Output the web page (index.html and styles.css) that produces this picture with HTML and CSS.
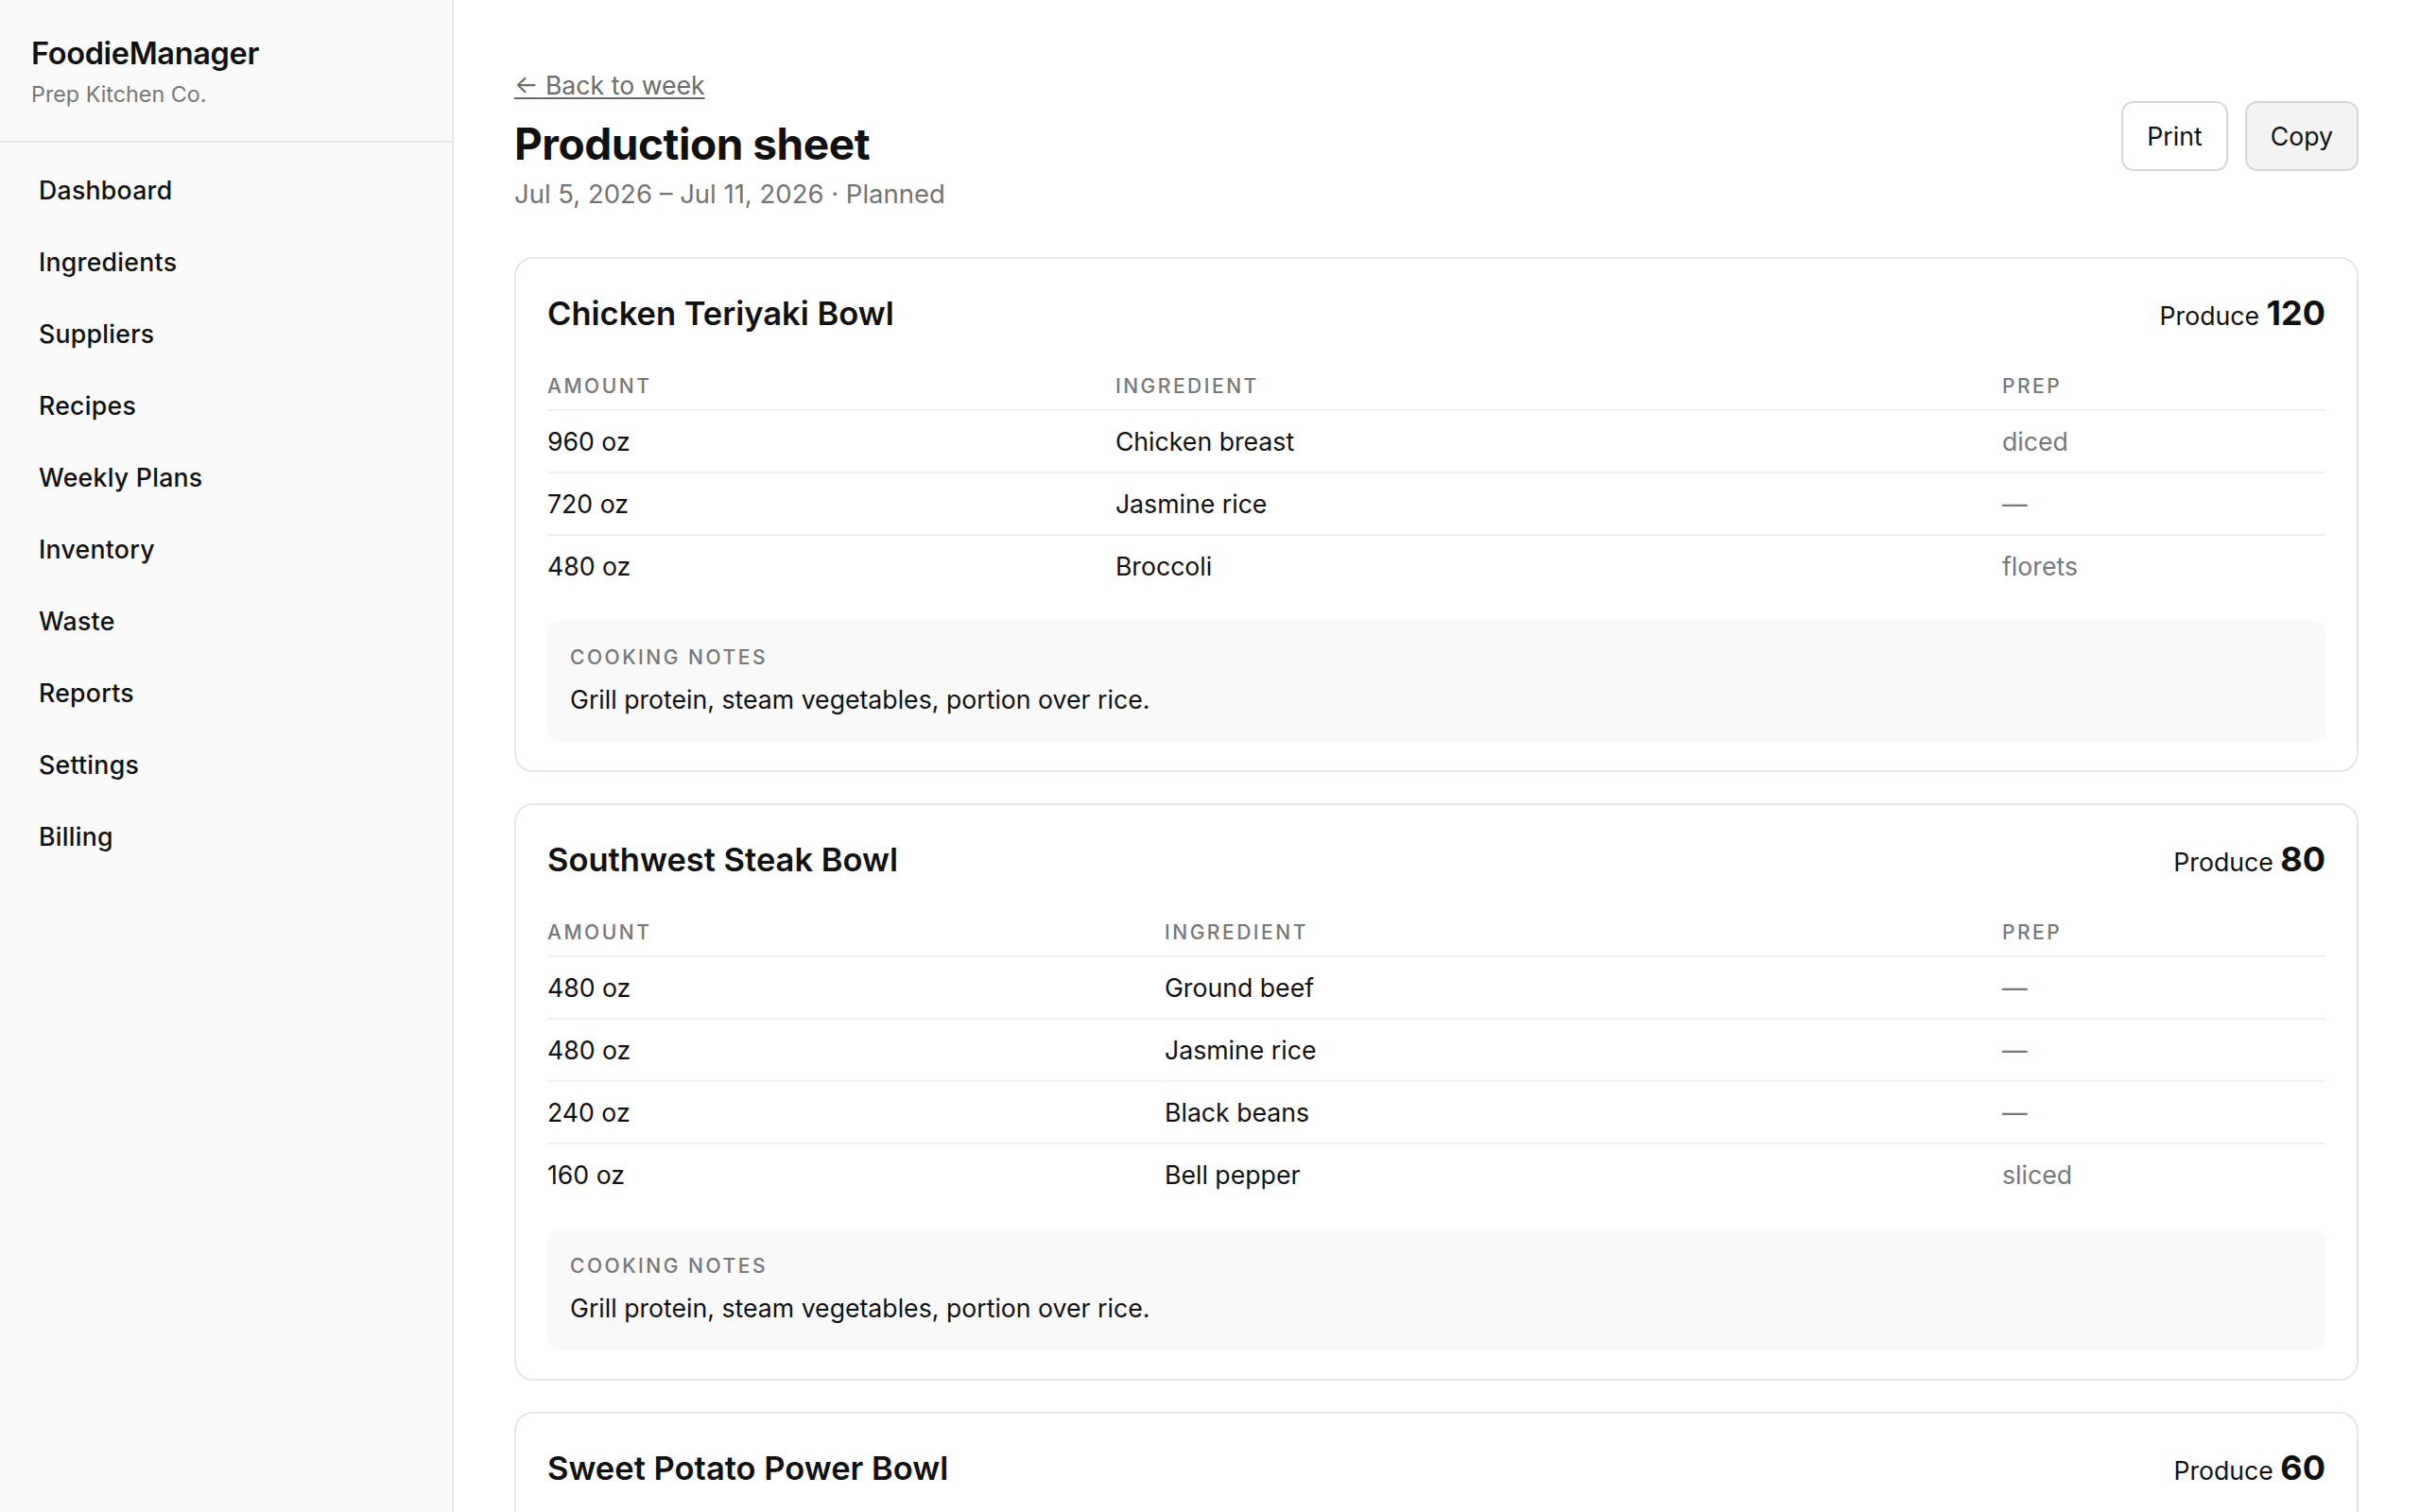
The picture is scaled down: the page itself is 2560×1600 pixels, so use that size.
FILE: index.html
```html
<!DOCTYPE html>
<html lang="en">

<head>
  <meta charset="UTF-8">
  <meta name="viewport" content="width=device-width, initial-scale=1.0">
  <title>Production sheet - FoodieManager</title>
  <link rel="stylesheet" href="styles.css">
</head>

<body>
  <div class="app">
    <aside class="sidebar">
      <div class="brand">
        <div class="brand-name">FoodieManager</div>
        <div class="brand-sub">Prep Kitchen Co.</div>
      </div>
      <nav class="nav">
        <a href="#">Dashboard</a>
        <a href="#">Ingredients</a>
        <a href="#">Suppliers</a>
        <a href="#">Recipes</a>
        <a href="#">Weekly Plans</a>
        <a href="#">Inventory</a>
        <a href="#">Waste</a>
        <a href="#">Reports</a>
        <a href="#">Settings</a>
        <a href="#">Billing</a>
      </nav>
    </aside>

    <main class="main">
      <div class="page-head">
        <div>
          <a class="back" href="#">← Back to week</a>
          <h1>Production sheet</h1>
          <div class="meta">Jul 5, 2026 – Jul 11, 2026 · Planned</div>
        </div>
        <div class="actions">
          <button class="btn">Print</button>
          <button class="btn btn-muted">Copy</button>
        </div>
      </div>

      <!-- one card per recipe -->
      <section class="recipe">
        <div class="recipe-head">
          <h2 class="recipe-title">Chicken Teriyaki Bowl</h2>
          <div class="yield">Produce <strong>120</strong></div>
        </div>
        <table class="lines">
          <thead>
            <tr><th>Amount</th><th>Ingredient</th><th class="prep">Prep</th></tr>
          </thead>
          <tbody>
            <tr><td>960 oz</td><td>Chicken breast</td><td class="prep">diced</td></tr>
            <tr><td>720 oz</td><td>Jasmine rice</td><td class="prep">—</td></tr>
            <tr><td>480 oz</td><td>Broccoli</td><td class="prep">florets</td></tr>
          </tbody>
        </table>
        <div class="notes">
          <div class="notes-label">Cooking notes</div>
          <p>Grill protein, steam vegetables, portion over rice.</p>
        </div>
      </section>

      <section class="recipe">
        <div class="recipe-head">
          <h2 class="recipe-title">Southwest Steak Bowl</h2>
          <div class="yield">Produce <strong>80</strong></div>
        </div>
        <table class="lines">
          <thead>
            <tr><th>Amount</th><th>Ingredient</th><th class="prep">Prep</th></tr>
          </thead>
          <tbody>
            <tr><td>480 oz</td><td>Ground beef</td><td class="prep">—</td></tr>
            <tr><td>480 oz</td><td>Jasmine rice</td><td class="prep">—</td></tr>
            <tr><td>240 oz</td><td>Black beans</td><td class="prep">—</td></tr>
            <tr><td>160 oz</td><td>Bell pepper</td><td class="prep">sliced</td></tr>
          </tbody>
        </table>
        <div class="notes">
          <div class="notes-label">Cooking notes</div>
          <p>Grill protein, steam vegetables, portion over rice.</p>
        </div>
      </section>

      <section class="recipe">
        <div class="recipe-head">
          <h2 class="recipe-title">Sweet Potato Power Bowl</h2>
          <div class="yield">Produce <strong>60</strong></div>
        </div>
        <table class="lines">
          <thead>
            <tr><th>Amount</th><th>Ingredient</th><th class="prep">Prep</th></tr>
          </thead>
          <tbody>
            <tr><td>360 oz</td><td>Sweet potato</td><td class="prep">cubed</td></tr>
            <tr><td>240 oz</td><td>Quinoa</td><td class="prep">—</td></tr>
            <tr><td>180 oz</td><td>Chickpeas</td><td class="prep">roasted</td></tr>
          </tbody>
        </table>
        <div class="notes">
          <div class="notes-label">Cooking notes</div>
          <p>Roast potatoes and chickpeas, portion over quinoa.</p>
        </div>
      </section>
    </main>
  </div>
</body>

</html>
```

FILE: styles.css
```css
/* Base */
* {
  box-sizing: border-box;
}
body {
  margin: 0;
  background: #fff;
  color: #111;
  font-family: Inter, 'Noto Sans', sans-serif;
}
.app {
  display: flex;
  min-height: 100vh;
}

/* Sidebar */
.sidebar {
  width: 480px;
  flex-shrink: 0;
  background: #fafafa;
  border-right: 2px solid #e8e8e8;
}
.brand {
  padding: 33px;
  border-bottom: 2px solid #e8e8e8;
}
.brand-name {
  font-size: 32.5px;
  line-height: 47px;
  font-weight: 600;
  letter-spacing: -0.01em;
}
.brand-sub {
  margin-top: 3px;
  font-size: 23.3px;
  line-height: 33px;
  color: #777;
}
.nav {
  display: flex;
  flex-direction: column;
  gap: 2px;
  padding: 13px 20px;
}
.nav a {
  padding: 17px 21px;
  border-radius: 10px;
  color: #111;
  text-decoration: none;
  font-size: 26.67px;
  line-height: 40px;
  font-weight: 500;
  letter-spacing: 0.01em;
}

/* Main */
.main {
  flex: 1;
  min-width: 0;
  padding: 70px 65px 64px 64px;
}
.page-head {
  display: flex;
  justify-content: space-between;
  align-items: flex-start;
  margin-bottom: 47px;
}
.back {
  display: inline-block;
  color: #6b6b6b;
  font-size: 26.67px;
  line-height: 40px;
  text-decoration: underline;
  text-underline-offset: 3px;
}
h1 {
  margin: 14px 0 4px;
  font-size: 46px;
  line-height: 57px;
  font-weight: 700;
  letter-spacing: -0.01em;
}
.meta {
  color: #737373;
  font-size: 27.5px;
  line-height: 40px;
}
.actions {
  display: flex;
  gap: 18px;
  margin-top: 37px;
}
.btn {
  padding: 15px 25px;
  border: 2px solid #d6d6d6;
  border-radius: 13px;
  background: #fff;
  color: #111;
  font-family: inherit;
  font-size: 26.67px;
  line-height: 40px;
  cursor: pointer;
}
.btn-muted {
  background: #f3f3f3;
}

/* Recipe card */
.recipe {
  border: 2px solid #e6e6e6;
  border-radius: 20px;
  padding: 34px 33px 30px;
  margin-bottom: 33px;
}
.recipe-head {
  display: flex;
  justify-content: space-between;
  align-items: baseline;
  margin-bottom: 24px;
}
.recipe-title {
  margin: 0;
  font-size: 34.5px;
  line-height: 47px;
  font-weight: 600;
}
.yield {
  font-size: 26.67px;
  line-height: 47px;
}
.yield strong {
  font-size: 36px;
  font-weight: 700;
}

/* Ingredient table */
.lines {
  width: 100%;
  border-collapse: collapse;
}
.lines th {
  padding: 13px 30px 11px 0;
  border-bottom: 2px solid #f0f0f0;
  text-align: left;
  color: #777;
  font-size: 21px;
  line-height: 27px;
  font-weight: 500;
  letter-spacing: 0.12em;
  text-transform: uppercase;
}
.lines td {
  padding: 12px 30px 12px 0;
  border-bottom: 2px solid #f0f0f0;
  font-size: 26.67px;
  line-height: 40px;
}
.lines tr:last-child td {
  border-bottom: 0;
}
.lines .prep {
  width: 342px;
  padding-right: 0;
}
.lines td.prep {
  color: #777;
}

/* Notes */
.notes {
  margin-top: 26px;
  padding: 25px 24px;
  border-radius: 14px;
  background: #f9f9f9;
}
.notes-label {
  color: #777;
  font-size: 21px;
  line-height: 27px;
  font-weight: 500;
  letter-spacing: 0.12em;
  text-transform: uppercase;
}
.notes p {
  margin: 11px 0 0;
  font-size: 26.67px;
  line-height: 40px;
}
```
